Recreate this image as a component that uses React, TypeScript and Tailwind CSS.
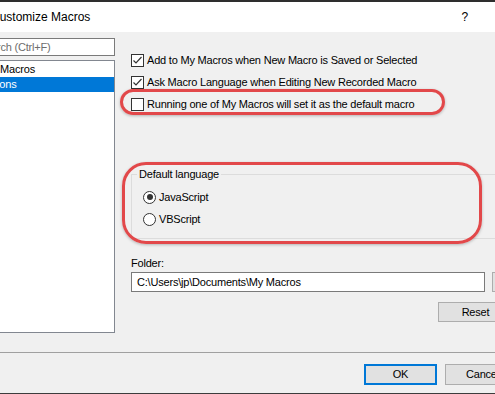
import React from 'react';

const CheckRow: React.FC<{ label: string; checked?: boolean }> = ({ label, checked }) => (
  <div className="h-[22px] flex items-center gap-[3px]">
    <div className="w-[13px] h-[13px] border border-[#333333] bg-white flex items-center justify-center shrink-0">
      {checked && (
        <svg width="11" height="11" viewBox="0 0 11 11">
          <path d="M1.5 5.5 L4 8 L9.5 2" fill="none" stroke="#333333" strokeWidth="1.2" />
        </svg>
      )}
    </div>
    <span className="whitespace-nowrap">{label}</span>
  </div>
);

const RadioRow: React.FC<{ label: string; selected?: boolean }> = ({ label, selected }) => (
  <div className="h-[22px] flex items-center gap-[3px]">
    <div className="w-[13px] h-[13px] rounded-full border border-[#333333] bg-white flex items-center justify-center shrink-0">
      {selected && <div className="w-[6px] h-[6px] rounded-full bg-[#333333]" />}
    </div>
    <span>{label}</span>
  </div>
);

export default function App() {
  return (
    <div className="relative w-[495px] h-[394px] overflow-hidden bg-[#f0f0f0] flex flex-col text-[11px] tracking-[-0.2px] text-black font-['Liberation_Sans',Arial,sans-serif]">
      <div className="h-[2px] bg-[#2e2e2e] shrink-0" />

      {/* title bar */}
      <div className="h-[30px] bg-white flex items-center justify-between shrink-0 pr-[27px]">
        <span className="-ml-[9px] text-[12px] tracking-normal whitespace-nowrap">Customize Macros</span>
        <span className="text-[12px]">?</span>
      </div>

      <div className="h-[320px] flex shrink-0">
        {/* left tree */}
        <div className="w-[115px] shrink-0 overflow-hidden flex flex-col pt-[6px]">
          <div className="-ml-[40px] w-[155px] h-[18px] border border-[#7a7a7a] bg-white flex items-center pl-[17px] text-[#6d6d6d] whitespace-nowrap">
            Search (Ctrl+F)
          </div>
          <div className="-ml-[30px] w-[145px] h-[273px] mt-[4px] border border-[#828790] bg-white pt-[1px]">
            <div className="h-[15px] flex items-center pl-[12px] whitespace-nowrap">My Macros</div>
            <div className="h-[15px] flex items-center pl-[9px] bg-[#0078d7] text-white whitespace-nowrap">Options</div>
          </div>
        </div>

        {/* options */}
        <div className="w-[398px] shrink-0 pl-[16px] pt-[17px] flex flex-col">
          <CheckRow label="Add to My Macros when New Macro is Saved or Selected" checked />
          <CheckRow label="Ask Macro Language when Editing New Recorded Macro" checked />
          <CheckRow label="Running one of My Macros will set it as the default macro" />

          <fieldset className="mt-[51px] w-[380px] border border-[#dcdcdc] pb-[8px]">
            <legend className="ml-[5px] px-[2px] leading-[16px]">Default language</legend>
            <div className="pl-[11px] pt-[4px]">
              <RadioRow label="JavaScript" selected />
              <RadioRow label="VBScript" />
            </div>
          </fieldset>

          <div className="mt-[16px] h-[16px] leading-[16px]">Folder:</div>
          <div className="mt-[1px] h-[20px] flex gap-[7px]">
            <div className="flex-1 border border-[#7a7a7a] bg-white flex items-center pl-[5px] whitespace-nowrap">
              {'C:\\Users\\jp\\Documents\\My Macros'}
            </div>
            <div className="w-[21px] border border-[#adadad] bg-[#e1e1e1] flex items-center justify-center text-[#c8901c]">
              ...
            </div>
          </div>
          <div className="mt-[10px] flex justify-end">
            <div className="w-[75px] h-[20px] border border-[#adadad] bg-[#e1e1e1] flex items-center justify-center">
              Reset
            </div>
          </div>
        </div>
      </div>

      <div className="h-px bg-[#a0a0a0] shrink-0" />

      {/* footer */}
      <div className="flex-1 pt-[11px] pl-[364px] flex gap-[8px]">
        <div className="w-[73px] h-[21px] shrink-0 border-2 border-[#0078d7] bg-[#e1e1e1] flex items-center justify-center">
          OK
        </div>
        <div className="w-[75px] h-[21px] shrink-0 border border-[#adadad] bg-[#e1e1e1] flex items-center justify-center">
          Cancel
        </div>
      </div>
      <div className="h-px bg-[#3c3c3c] shrink-0" />

      {/* red annotation marks */}
      <div className="absolute left-[120px] top-[89px] w-[325px] h-[26px] rounded-[13px] border-[3px] border-[#e2484a] shadow-[0_1px_3px_rgba(0,0,0,0.25)]" />
      <div className="absolute left-[122px] top-[162px] w-[360px] h-[82px] rounded-[24px] border-[3px] border-[#e2484a] shadow-[0_1px_3px_rgba(0,0,0,0.25)]" />
    </div>
  );
}
